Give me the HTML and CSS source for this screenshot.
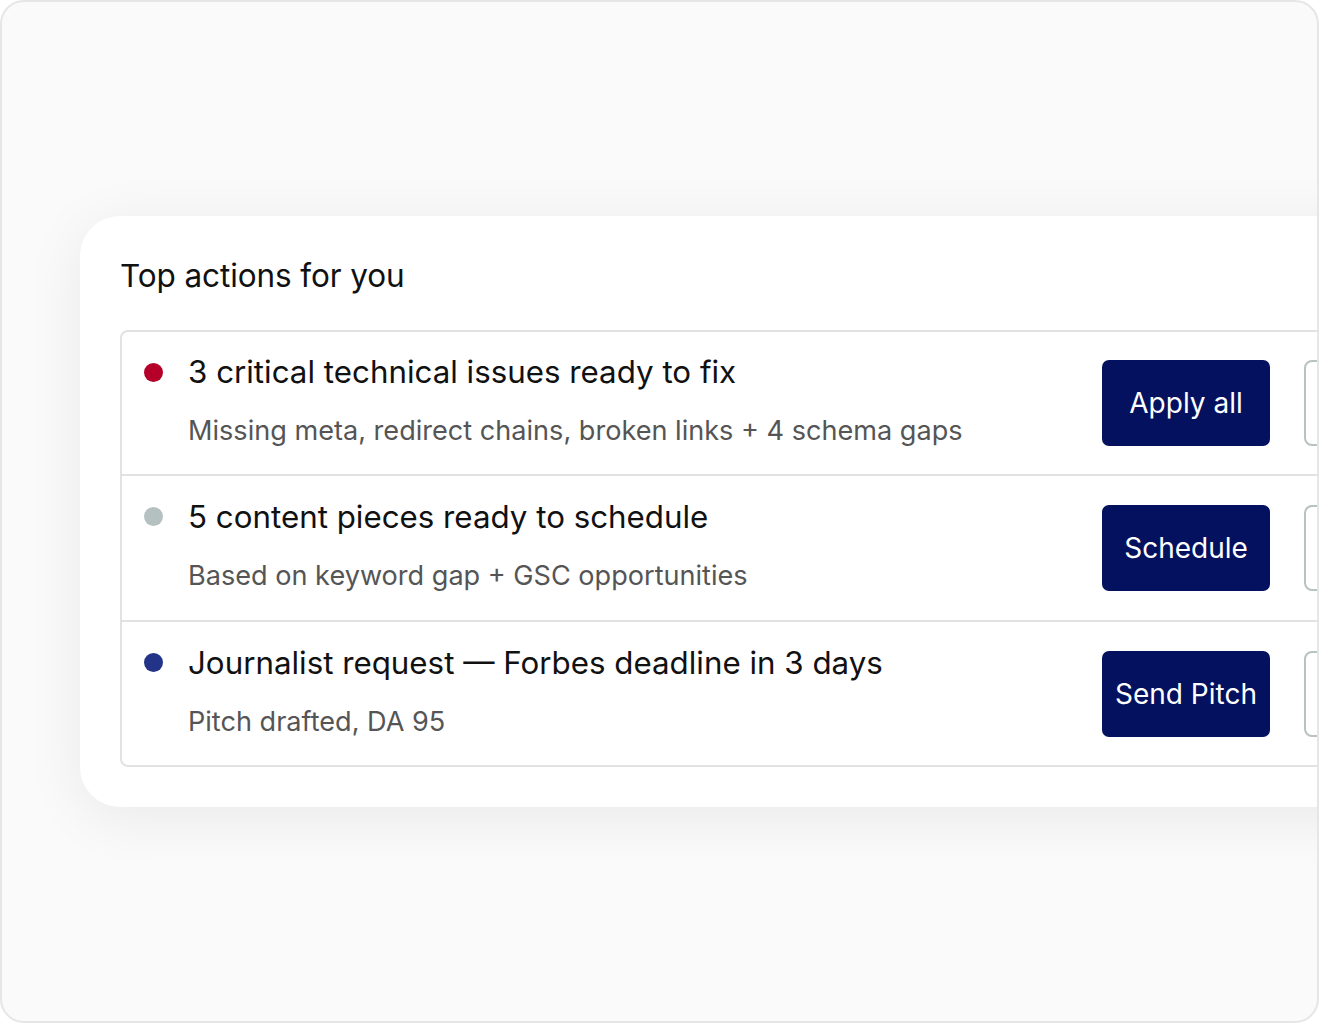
FILE: index.html
```html
<!DOCTYPE html>
<html>
<head>
<meta charset="utf-8">
<link rel="stylesheet" href="styles.css">
</head>
<body>
<div class="frame">
  <div class="card">
    <h2 class="heading">Top actions for you</h2>
    <div class="list">
      <div class="row">
        <span class="dot dot-red"></span>
        <div class="text">
          <div class="title">3 critical technical issues ready to fix</div>
          <div class="sub">Missing meta, redirect chains, broken links + 4 schema gaps</div>
        </div>
        <button class="btn">Apply all</button>
        <button class="ghost"></button>
      </div>
      <div class="row">
        <span class="dot dot-gray"></span>
        <div class="text">
          <div class="title">5 content pieces ready to schedule</div>
          <div class="sub">Based on keyword gap + GSC opportunities</div>
        </div>
        <button class="btn">Schedule</button>
        <button class="ghost"></button>
      </div>
      <div class="row">
        <span class="dot dot-blue"></span>
        <div class="text">
          <div class="title">Journalist request — Forbes deadline in 3 days</div>
          <div class="sub">Pitch drafted, DA 95</div>
        </div>
        <button class="btn">Send Pitch</button>
        <button class="ghost"></button>
      </div>
    </div>
  </div>
</div>
</body>
</html>
```
FILE: styles.css
```css
* { box-sizing: border-box; }
html, body { margin: 0; padding: 0; background: #ffffff; }
body { font-family: Inter, "Open Sans", sans-serif; }
.frame {
  width: 1319px;
  height: 1023px;
  border: 2px solid #e6e6e6;
  border-radius: 24px;
  background: #fafafa;
  overflow: hidden;
  padding-top: 214px;
  padding-left: 78px;
  display: flex;
  align-items: flex-start;
}
.card {
  flex: 0 0 auto;
  width: 1400px;
  background: #ffffff;
  border-radius: 40px;
  padding: 42px 40px 40px 40px;
  box-shadow: 0 10px 60px rgba(0,0,0,0.07);
}
.heading {
  margin: 0 0 36px 0;
  font-weight: 400;
  font-size: 31.5px;
  line-height: 36px;
  color: #111;
  letter-spacing: -0.1px;
}
.list {
  border: 2px solid #e2e2e2;
  border-radius: 8px;
}
.row {
  display: flex;
  align-items: center;
  height: 146px;
  padding-left: 22px;
  border-top: 2px solid #e2e2e2;
}
.row:first-child { border-top: 0; height: 142px; }
.row:last-child { height: 145px; }
.dot {
  flex: 0 0 19px;
  width: 19px;
  height: 19px;
  border-radius: 50%;
  align-self: flex-start;
  margin-top: 31px;
  margin-right: 25px;
}
.dot-red { background: #b5002a; }
.dot-gray { background: #b5c0c0; }
.dot-blue { background: #233388; }
.text { flex: 0 0 880px; margin-right: 34px; margin-top: -6px; }
.title {
  font-size: 31.3px;
  line-height: 40px;
  color: #111;
}
.sub {
  margin-top: 22px;
  font-size: 27.1px;
  line-height: 34px;
  color: #555;
}
.btn {
  flex: 0 0 168px;
  height: 86px;
  border: 0;
  border-radius: 7px;
  background: #03115f;
  color: #fff;
  font-family: inherit;
  font-size: 28px;
  padding: 0;
  margin-right: 34px;
}
.ghost {
  flex: 0 0 168px;
  height: 86px;
  border: 2px solid #b8c2c2;
  border-radius: 8px;
  background: #fff;
}
```
